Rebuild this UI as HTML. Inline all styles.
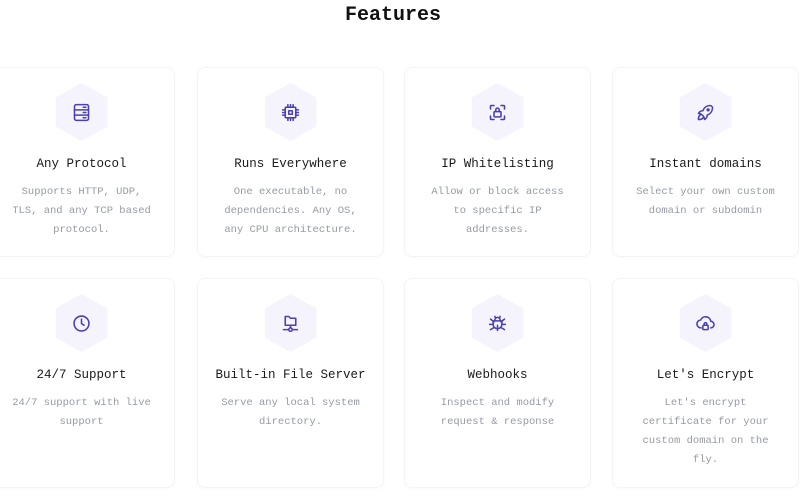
<!DOCTYPE html>
<html><head><style>
*{margin:0;padding:0;box-sizing:border-box}
body{width:800px;height:500px;background:#fff;position:relative;overflow:hidden;font-family:"Liberation Mono",monospace}
h1{position:absolute;top:4px;left:0;width:786px;text-align:center;font-size:20px;font-weight:bold;color:#111}
.c{position:absolute;width:187px;border:1px solid #f4f4f6;border-radius:8px;text-align:center;box-shadow:0 1px 4px rgba(0,0,0,0.025)}
.hx{position:absolute;left:50%;top:15px;margin-left:-26px;width:52px;height:58px;background:#f5f4fc;clip-path:polygon(50% 0,100% 25%,100% 75%,50% 100%,0 75%,0 25%);display:flex;align-items:center;justify-content:center}
.hx svg{width:21px;height:21px;stroke:#4a3fb3;fill:none;stroke-width:1.8;stroke-linecap:round;stroke-linejoin:round}
.t{position:absolute;top:89px;left:0;width:100%;font-size:12.5px;color:#1a1a1a}
.d{position:absolute;top:115px;left:20px;right:20px;font-size:10.5px;line-height:19px;color:#969aa3}
.r1{top:67px;height:190px}.r2{top:278px;height:210px}
</style></head><body>
<h1>Features</h1>
<div class="c r1" style="left:-12px"><div class="hx"><svg viewBox="0 0 24 24"><rect x="4" y="3" width="16" height="18" rx="2"/><path d="M4 9h16M4 15h16M14 6h3M14 12h3M14 18h3"/></svg></div><div class="t">Any Protocol</div><div class="d">Supports HTTP, UDP, TLS, and any TCP based protocol.</div></div>
<div class="c r1" style="left:197px"><div class="hx"><svg viewBox="0 0 24 24"><rect x="6" y="6" width="12" height="12" rx="1"/><rect x="10" y="10" width="4" height="4"/><path d="M9 3v3M12 3v3M15 3v3M9 18v3M12 18v3M15 18v3M3 9h3M3 12h3M3 15h3M18 9h3M18 12h3M18 15h3"/></svg></div><div class="t">Runs Everywhere</div><div class="d">One executable, no dependencies. Any OS, any CPU architecture.</div></div>
<div class="c r1" style="left:404px"><div class="hx"><svg viewBox="0 0 24 24"><path d="M4 8V5a1 1 0 0 1 1-1h3M16 4h3a1 1 0 0 1 1 1v3M20 16v3a1 1 0 0 1-1 1h-3M8 20H5a1 1 0 0 1-1-1v-3"/><rect x="8" y="11" width="8" height="6" rx="1"/><path d="M10 11V9a2 2 0 0 1 4 0v2"/></svg></div><div class="t">IP Whitelisting</div><div class="d">Allow or block access to specific IP addresses.</div></div>
<div class="c r1" style="left:612px"><div class="hx"><svg viewBox="0 0 24 24"><path d="M4 13a8 8 0 0 1 7 7 6 6 0 0 0 3-5 9 9 0 0 0 6-8 3 3 0 0 0-3-3 9 9 0 0 0-8 6 6 6 0 0 0-5 3"/><path d="M7 14a6 6 0 0 0-3 6 6 6 0 0 0 6-3"/><circle cx="15" cy="9" r="1"/></svg></div><div class="t">Instant domains</div><div class="d">Select your own custom domain or subdomin</div></div>
<div class="c r2" style="left:-12px"><div class="hx"><svg viewBox="0 0 24 24"><circle cx="12" cy="12" r="8.5"/><path d="M12 7v5l3 2"/></svg></div><div class="t">24/7 Support</div><div class="d">24/7 support with live support</div></div>
<div class="c r2" style="left:197px"><div class="hx"><svg viewBox="0 0 24 24"><path d="M6 4h4l2 2h6v8H6z"/><path d="M12 14v3M4 19h6M14 19h6"/><circle cx="12" cy="19" r="2"/></svg></div><div class="t">Built-in File Server</div><div class="d">Serve any local system directory.</div></div>
<div class="c r2" style="left:404px"><div class="hx"><svg viewBox="0 0 24 24"><path d="M9 9V8a3 3 0 0 1 6 0v1"/><path d="M8 9h8a1 1 0 0 1 1 1v3a5 5 0 0 1-10 0v-3a1 1 0 0 1 1-1z"/><path d="M3 13h4M17 13h4M12 20v-6M4 19l3.4-2M20 19l-3.4-2M4 7l4 3M20 7l-4 3M9 4l1 2M15 4l-1 2"/></svg></div><div class="t">Webhooks</div><div class="d">Inspect and modify request &amp; response</div></div>
<div class="c r2" style="left:612px"><div class="hx"><svg viewBox="0 0 24 24"><path d="M7 17a4.5 4.5 0 0 1-.5-9 6 6 0 0 1 11.5 1.5A3.5 3.5 0 0 1 18 17"/><rect x="9" y="14" width="6" height="5" rx="1"/><path d="M10.5 14v-1.5a1.5 1.5 0 0 1 3 0V14"/></svg></div><div class="t">Let's Encrypt</div><div class="d">Let's encrypt certificate for your custom domain on the fly.</div></div>
</body></html>
